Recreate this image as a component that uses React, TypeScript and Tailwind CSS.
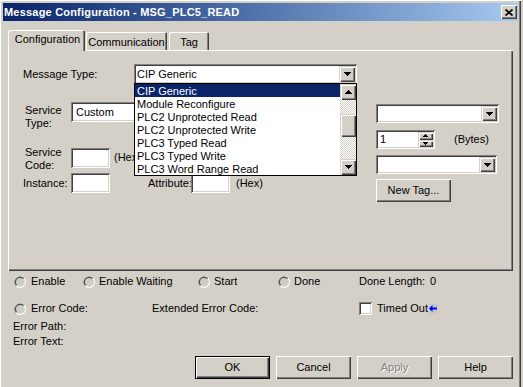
import React from "react";

const SUNKEN =
  "bg-white shadow-[inset_1px_1px_#808080,inset_-1px_-1px_#ffffff,inset_2px_2px_#404040,inset_-2px_-2px_#d4d0c8]";
const RAISED =
  "bg-[#d4d0c8] shadow-[inset_1px_1px_#ffffff,inset_-1px_-1px_#404040,inset_-2px_-2px_#808080]";
const SCROLLBTN =
  "bg-[#d4d0c8] shadow-[inset_1px_1px_#d4d0c8,inset_2px_2px_#ffffff,inset_-1px_-1px_#404040,inset_-2px_-2px_#808080]";
const DITHER =
  "bg-[image:repeating-conic-gradient(#d4d0c8_0%_25%,#ffffff_0%_50%)] bg-[length:2px_2px]";

function Tri({ up = false, size = 7 }: { up?: boolean; size?: number }) {
  const rows: { i: number; w: number }[] = [];
  for (let i = 0, w = size; w > 0; i++, w -= 2) rows.push({ i, w });
  const h = rows.length;
  return (
    <svg width={size} height={h} shapeRendering="crispEdges" className="block">
      {rows.map(({ i, w }) => (
        <rect key={i} x={i} y={up ? h - 1 - i : i} width={w} height={1} fill="#000" />
      ))}
    </svg>
  );
}

function Combo({
  className,
  pad,
  children,
}: {
  className: string;
  pad: string;
  children?: React.ReactNode;
}) {
  return (
    <div className={`flex p-[2px] ${SUNKEN} ${className}`}>
      <div className={`flex-1 flex items-center overflow-hidden whitespace-nowrap ${pad}`}>
        {children}
      </div>
      <div className={`w-[16px] h-full flex items-center justify-center ${SCROLLBTN}`}>
        <Tri />
      </div>
    </div>
  );
}

function Radio() {
  return (
    <svg width="12" height="12" className="block shrink-0">
      <circle cx="6" cy="6" r="6" fill="#ffffff" />
      <path d="M 1.76 10.24 A 6 6 0 0 1 10.24 1.76 Z" fill="#808080" />
      <circle cx="6" cy="6" r="5" fill="#d4d0c8" />
      <path d="M 2.46 9.54 A 5 5 0 0 1 9.54 2.46 Z" fill="#404040" />
      <circle cx="6" cy="6" r="4" fill="#d0ccc4" />
    </svg>
  );
}

const items = [
  "CIP Generic",
  "Module Reconfigure",
  "PLC2 Unprotected Read",
  "PLC2 Unprotected Write",
  "PLC3 Typed Read",
  "PLC3 Typed Write",
  "PLC3 Word Range Read",
];

export default function App() {
  return (
    <div className="w-[523px] h-[387px] bg-[#d4d0c8] overflow-hidden font-['Liberation_Sans',Arial,sans-serif] text-[11px] leading-[13px] text-black">
      <div className="w-[521px] h-[387px] pt-[3px] px-[3px] shadow-[inset_1px_1px_#ffffff,inset_-1px_0_#404040,inset_-2px_0_#808080]">
        {/* Title bar */}
        <div className="h-[18px] flex items-center bg-linear-to-r from-[#0a246a] to-[#a6caf0] pl-[1px] pr-[1px]">
          <span className="font-bold text-white text-[11px] tracking-[0.2px] whitespace-nowrap">
            Message Configuration - MSG_PLC5_READ
          </span>
          <div className={`ml-auto w-[16px] h-[14px] flex items-center justify-center ${RAISED}`}>
            <svg width="8" height="7" className="block">
              <path d="M0.5 0.5 L7.5 6.5 M7.5 0.5 L0.5 6.5" stroke="#000" strokeWidth="1.7" />
            </svg>
          </div>
        </div>

        {/* Tabs */}
        <div className="flex items-end h-[20px] mt-[9px] ml-[5px]">
          <div className="relative z-10 w-[77px] h-[21px] mb-[-1px] bg-[#d4d0c8] rounded-t-[2px] shadow-[inset_1px_1px_#ffffff,inset_-1px_0_#404040,inset_-2px_0_#808080] flex justify-center pt-[3px] pl-[2px]">
            Configuration
          </div>
          <div className="ml-[1px] w-[81px] h-[18px] rounded-t-[2px] shadow-[inset_1px_1px_#ffffff,inset_-1px_0_#404040,inset_-2px_0_#808080] flex justify-center pt-[4px]">
            Communication
          </div>
          <div className="ml-[2px] w-[40px] h-[18px] rounded-t-[2px] shadow-[inset_1px_1px_#ffffff,inset_-1px_0_#404040,inset_-2px_0_#808080] flex justify-center pt-[4px]">
            Tag
          </div>
        </div>

        {/* Panel */}
        <div className="relative ml-[5px] w-[505px] h-[221px] shadow-[inset_1px_1px_#ffffff,inset_-1px_-1px_#404040,inset_-2px_-2px_#808080] flex">
          <div className="w-[349px] shrink-0 pt-[14px] pl-[15px]">
            <div className="flex items-center h-[20px]">
              <div className="w-[111px] whitespace-nowrap">Message Type:</div>
              <Combo className="w-[223px] h-[20px]" pad="pl-[1px]">
                CIP Generic
              </Combo>
            </div>
            <div className="flex items-start mt-[18px]">
              <div className="ml-[2px] mt-[2px] w-[46px]">
                Service
                <br />
                Type:
              </div>
              <Combo className="w-[270px] h-[20px]" pad="pl-[3px]">
                Custom
              </Combo>
            </div>
            <div className="flex items-start mt-[16px]">
              <div className="ml-[2px] w-[46px]">
                Service
                <br />
                Code:
              </div>
              <div className={`mt-[2px] w-[39px] h-[20px] ${SUNKEN}`} />
              <div className="ml-[4px] mt-[5px]">(Hex)</div>
            </div>
            <div className="flex items-center h-[20px] mt-[1px]">
              <div className="w-[48px]">Instance:</div>
              <div className={`w-[39px] h-[20px] ${SUNKEN}`} />
              <div className="ml-[38px] w-[43px] whitespace-nowrap">Attribute:</div>
              <div className={`w-[39px] h-[20px] ${SUNKEN}`} />
              <div className="ml-[6px]">(Hex)</div>
            </div>
          </div>

          <div className="ml-[19px] pt-[54px]">
            <Combo className="w-[123px] h-[19px]" pad="pl-[1px]" />
            <div className="flex items-center mt-[7px]">
              <div className={`flex p-[2px] w-[59px] h-[19px] ${SUNKEN}`}>
                <div className="flex-1 flex items-center pl-[2px]">1</div>
                <div className="w-[15px] flex flex-col">
                  <div className={`flex-1 flex items-center justify-center ${SCROLLBTN}`}>
                    <Tri up size={5} />
                  </div>
                  <div className={`flex-1 flex items-center justify-center ${SCROLLBTN}`}>
                    <Tri size={5} />
                  </div>
                </div>
              </div>
              <div className="ml-[19px]">(Bytes)</div>
            </div>
            <Combo className="w-[121px] h-[19px] mt-[6px]" pad="pl-[1px]" />
            <div className={`mt-[5px] w-[75px] h-[23px] flex items-center justify-center ${RAISED}`}>
              New Tag...
            </div>
          </div>

          {/* Dropdown list */}
          <div className="absolute z-20 left-[126px] top-[33px] w-[223px] h-[93px] border border-black bg-white flex">
            <div className="flex-1 flex flex-col">
              {items.map((t, i) => (
                <div
                  key={t}
                  className={`h-[13px] leading-[15px] pl-[2px] whitespace-nowrap ${
                    i === 0 ? "bg-[#0a246a] text-white" : ""
                  }`}
                >
                  {t}
                </div>
              ))}
            </div>
            <div className="w-[16px] flex flex-col">
              <div className={`h-[16px] flex items-center justify-center ${SCROLLBTN}`}>
                <Tri up />
              </div>
              <div className={`h-[14px] ${DITHER}`} />
              <div className={`h-[23px] ${SCROLLBTN}`} />
              <div className={`flex-1 ${DITHER}`} />
              <div className={`h-[16px] flex items-center justify-center ${SCROLLBTN}`}>
                <Tri />
              </div>
            </div>
          </div>
        </div>

        {/* Status area */}
        <div className="pl-[11px]">
          <div className="flex items-center h-[13px] mt-[4px]">
            <div className="flex items-center w-[69px]">
              <Radio />
              <span className="ml-[5px]">Enable</span>
            </div>
            <div className="flex items-center w-[115px]">
              <Radio />
              <span className="ml-[4px]">Enable Waiting</span>
            </div>
            <div className="flex items-center w-[80px]">
              <Radio />
              <span className="ml-[4px]">Start</span>
            </div>
            <div className="flex items-center w-[81px]">
              <Radio />
              <span className="ml-[4px]">Done</span>
            </div>
            <span>Done Length:</span>
            <span className="ml-[5px]">0</span>
          </div>
          <div className="flex items-center h-[13px] mt-[14px]">
            <div className="flex items-center w-[138px]">
              <Radio />
              <span className="ml-[5px]">Error Code:</span>
            </div>
            <div className="w-[207px]">Extended Error Code:</div>
            <div className={`w-[13px] h-[13px] ${SUNKEN}`} />
            <span className="ml-[5px]">Timed Out</span>
            <div className="ml-[1px] w-[9px] h-[10px] bg-[#c8c8cc] flex items-center justify-center">
              <svg width="8" height="7" className="block">
                <polygon points="0,3.5 3.5,0 3.5,2.5 8,2.5 8,4.5 3.5,4.5 3.5,7" fill="#0000ff" />
              </svg>
            </div>
          </div>
          <div className="h-[13px] mt-[5px] ml-[-1px]">Error Path:</div>
          <div className="h-[13px] mt-[2px] ml-[-1px]">Error Text:</div>
          <div className="flex gap-[6px] mt-[8px] ml-[181px]">
            <div className="w-[75px] h-[23px] flex items-center justify-center bg-[#d4d0c8] shadow-[inset_0_0_0_1px_#000000,inset_2px_2px_#ffffff,inset_-2px_-2px_#404040,inset_-3px_-3px_#808080]">
              OK
            </div>
            <div className={`w-[75px] h-[23px] flex items-center justify-center ${RAISED}`}>
              Cancel
            </div>
            <div
              className={`w-[75px] h-[23px] flex items-center justify-center text-[#808080] [text-shadow:1px_1px_0_#ffffff] ${RAISED}`}
            >
              Apply
            </div>
            <div className={`w-[75px] h-[23px] flex items-center justify-center ${RAISED}`}>
              Help
            </div>
          </div>
        </div>
      </div>
    </div>
  );
}
